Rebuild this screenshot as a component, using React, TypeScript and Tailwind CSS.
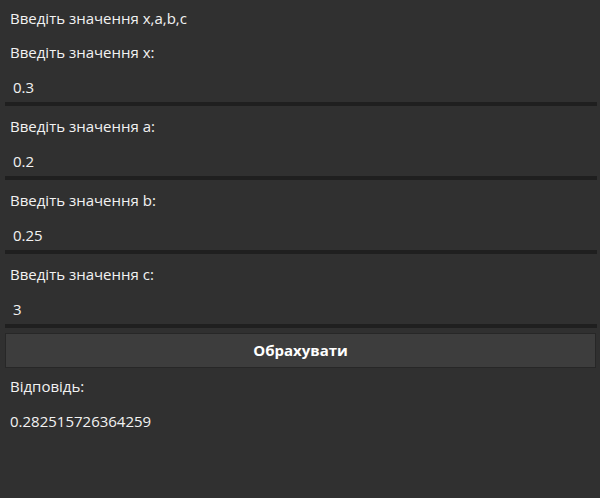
import React from "react";

const fields = [
  { label: "Введіть значення x:", value: "0.3" },
  { label: "Введіть значення a:", value: "0.2" },
  { label: "Введіть значення b:", value: "0.25" },
  { label: "Введіть значення c:", value: "3" },
];

export default function App() {
  return (
    <div
      className="w-[600px] h-[498px] bg-[#303030] text-[#f2f2f2] text-[15px] flex flex-col overflow-hidden"
      style={{ fontFamily: '"Open Sans", "Noto Sans", sans-serif' }}
    >
      <div className="h-[32px] flex items-center px-[10px] pt-[4px]">Введіть значення x,a,b,c</div>
      {fields.map((f) => (
        <div key={f.label} className="flex flex-col">
          <div className="h-[40px] flex items-center px-[10px]">{f.label}</div>
          <div className="h-[30px] flex items-center px-[13px]">{f.value}</div>
          <div className="h-[4px] mx-[5px] mr-[3px] bg-[#1f1f1f]" />
        </div>
      ))}
      <button className="mt-[5px] mx-[5px] mr-[4px] h-[35px] bg-[#3d3d3d] border border-[#272727] font-bold text-[15px] text-white flex items-center justify-center">
        Обрахувати
      </button>
      <div className="h-[37px] flex items-center px-[10px]">Відповідь:</div>
      <div className="h-[32px] flex items-center px-[10px]">0.282515726364259</div>
    </div>
  );
}
